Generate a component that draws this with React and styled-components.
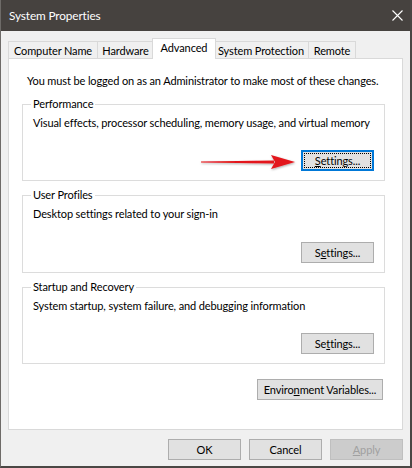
import React from "react";
import styled, { createGlobalStyle } from "styled-components";

const GlobalStyle = createGlobalStyle`
  html, body {
    margin: 0;
    padding: 0;
    background: #f0f0f0;
  }
  * {
    box-sizing: border-box;
  }
`;

const Window = styled.div`
  width: 412px;
  height: 468px;
  display: flex;
  flex-direction: column;
  background: #f0f0f0;
  border-left: 1px solid #6e6b68;
  border-right: 2px solid #4a4744;
  border-bottom: 2px solid #4a4744;
  font-family: Lato, "Liberation Sans", sans-serif;
  font-size: 11px;
  letter-spacing: -0.12px;
  color: #000;
`;

const TitleBar = styled.div`
  height: 31px;
  flex-shrink: 0;
  display: flex;
  align-items: center;
  justify-content: space-between;
  padding: 0 8px 0 8px;
  background: #46423f;
  color: #fff;
  font-size: 11.8px;
`;

const CloseButton = styled.div`
  width: 12px;
  height: 12px;
  display: flex;
  align-items: center;
  justify-content: center;
  margin-right: -1px;
`;

const Body = styled.div`
  flex: 1;
  display: flex;
  flex-direction: column;
  padding: 7px 7px 0 7px;
`;

const TabStrip = styled.div`
  height: 21px;
  display: flex;
  align-items: flex-end;
  margin-bottom: -1px;
  position: relative;
  z-index: 1;
`;

const Tab = styled.div`
  width: ${(p) => p.$w}px;
  height: ${(p) => (p.$active ? 21 : 18)}px;
  margin-left: ${(p) => (p.$active ? -2 : p.$first ? 0 : -1)}px;
  margin-right: ${(p) => (p.$active ? -2 : 0)}px;
  display: flex;
  align-items: center;
  justify-content: center;
  padding-bottom: ${(p) => (p.$active ? 3 : 0)}px;
  background: ${(p) => (p.$active ? "#fff" : "#f0f0f0")};
  border: 1px solid #d9d9d9;
  border-bottom: ${(p) => (p.$active ? "none" : "1px solid #d9d9d9")};
  position: relative;
  z-index: ${(p) => (p.$active ? 2 : 1)};
  white-space: nowrap;
`;

const Panel = styled.div`
  height: 372px;
  background: #fff;
  border: 1px solid #d9d9d9;
  display: flex;
  flex-direction: column;
  padding: 14px 17px 0 13px;
`;

const Notice = styled.div`
  line-height: 16px;
  padding-left: 5px;
  margin-bottom: 15px;
  white-space: nowrap;
`;

const Group = styled.div`
  position: relative;
  border: 1px solid #dcdcdc;
  padding: 10px 10px 9px 10px;
  margin-bottom: ${(p) => p.$gap}px;
  display: flex;
  flex-direction: column;
`;

const Legend = styled.span`
  position: absolute;
  top: -9px;
  left: 8px;
  padding: 0 2px;
  background: #fff;
  line-height: 16px;
`;

const Description = styled.div`
  line-height: 16px;
  white-space: nowrap;
`;

const ButtonRow = styled.div`
  display: flex;
  align-items: center;
  justify-content: flex-end;
  gap: 5px;
  margin-top: ${(p) => p.$top || 0}px;
`;

const Button = styled.div`
  position: relative;
  width: ${(p) => p.$w || 73}px;
  height: 21px;
  display: flex;
  align-items: center;
  justify-content: center;
  background: ${(p) => (p.$disabled ? "#cccccc" : "#e1e1e1")};
  border: 1px solid
    ${(p) => (p.$focused ? "#0078d7" : p.$disabled ? "#bfbfbf" : "#adadad")};
  box-shadow: ${(p) => (p.$focused ? "inset 0 0 0 1px #0078d7" : "none")};
  color: ${(p) => (p.$disabled ? "#a0a0a0" : "#000")};
  white-space: nowrap;

  ${(p) =>
    p.$focused &&
    `
    &::after {
      content: "";
      position: absolute;
      inset: 2px;
      border: 1px dotted #000;
    }
  `}
`;

const Arrow = styled.svg`
  flex-shrink: 0;
  width: 96px;
  height: 18px;
  margin-top: 2px;
  overflow: visible;
`;

const Footer = styled.div`
  display: flex;
  justify-content: flex-end;
  gap: 8px;
  padding-top: 9px;
`;

const groups = [
  {
    title: "Performance",
    text: "Visual effects, processor scheduling, memory usage, and virtual memory",
    label: (
      <>
        <u>S</u>ettings...
      </>
    ),
    focused: true,
    gap: 14,
    buttonTop: 19,
  },
  {
    title: "User Profiles",
    text: "Desktop settings related to your sign-in",
    label: (
      <>
        S<u>e</u>ttings...
      </>
    ),
    gap: 14,
    buttonTop: 20,
  },
  {
    title: "Startup and Recovery",
    text: "System startup, system failure, and debugging information",
    label: (
      <>
        Se<u>t</u>tings...
      </>
    ),
    gap: 14,
    buttonTop: 19,
  },
];

const tabs = [
  { name: "Computer Name", w: 90 },
  { name: "Hardware", w: 57 },
  { name: "Advanced", w: 64, active: true },
  { name: "System Protection", w: 96 },
  { name: "Remote", w: 48 },
];

const RedArrow = () => (
  <Arrow viewBox="0 0 96 18">
    <defs>
      <filter id="shadow" x="-10%" y="-50%" width="120%" height="200%">
        <feDropShadow dx="0.5" dy="1" stdDeviation="0.8" floodColor="#000" floodOpacity="0.35" />
      </filter>
    </defs>
    <g filter="url(#shadow)">
      <path d="M1 8.4 L74 7.6 L74 10.4 L1 9.6 Z" fill="#e3161b" />
      <path d="M71 2 L95 9 L71 16 L75 9 Z" fill="#e3161b" />
    </g>
  </Arrow>
);

export default function App() {
  return (
    <>
      <GlobalStyle />
      <Window>
        <TitleBar>
          <span>System Properties</span>
          <CloseButton>
            <svg width="11" height="11" viewBox="0 0 11 11">
              <path d="M0.5 0.5 L10.5 10.5 M10.5 0.5 L0.5 10.5" stroke="#fff" strokeWidth="1.1" />
            </svg>
          </CloseButton>
        </TitleBar>
        <Body>
          <TabStrip>
            {tabs.map((t, i) => (
              <Tab key={t.name} $w={t.w} $active={t.active} $first={i === 0}>
                {t.name}
              </Tab>
            ))}
          </TabStrip>
          <Panel>
            <Notice>You must be logged on as an Administrator to make most of these changes.</Notice>
            {groups.map((g) => (
              <Group key={g.title} $gap={g.gap}>
                <Legend>{g.title}</Legend>
                <Description>{g.text}</Description>
                <ButtonRow $top={g.buttonTop}>
                  {g.focused && <RedArrow />}
                  <Button $focused={g.focused}>{g.label}</Button>
                </ButtonRow>
              </Group>
            ))}
            <ButtonRow $top={1}>
              <Button $w={126} style={{ marginRight: 2 }}>
                Enviro<u>n</u>ment Variables...
              </Button>
            </ButtonRow>
          </Panel>
          <Footer>
            <Button>OK</Button>
            <Button>Cancel</Button>
            <Button $disabled>
              <u>A</u>pply
            </Button>
          </Footer>
        </Body>
      </Window>
    </>
  );
}
